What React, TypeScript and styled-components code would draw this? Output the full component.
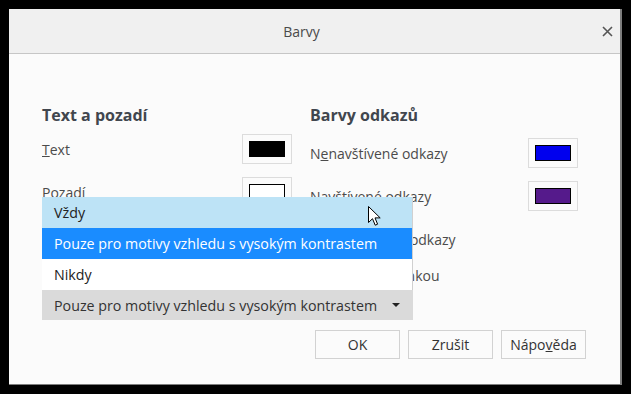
import styled, {createGlobalStyle} from 'styled-components';

const GlobalStyle = createGlobalStyle`
    html, body {
        margin: 0;
        padding: 0;
        background: #000;
    }
    body {
        font-family: 'Open Sans', 'Noto Sans', sans-serif;
    }
`;

const Screen = styled.div`
    width: 631px;
    height: 394px;
    padding: 9px 0 0 9px;
    box-sizing: border-box;
`;

const Dialog = styled.div`
    width: 613px;
    height: 376px;
    box-sizing: border-box;
    background: #fbfbfb;
    border-right: 2px solid #7d7d7d;
    border-bottom: 1px solid #7d7d7d;
    display: flex;
    flex-direction: column;
`;

const TitleBar = styled.div`
    height: 44px;
    display: flex;
    align-items: center;
    background: #f0f0f0;
    border-bottom: 1px solid #c6c6c6;
    color: #4a4a4a;
    font-size: 14px;
`;

const Title = styled.div`
    flex: 1;
    text-align: center;
`;

const CloseButton = styled.div`
    width: 26px;
    display: flex;
    justify-content: center;
    color: #555;
`;

const Body = styled.div`
    padding: 50px 42px 0 33px;
`;

const Columns = styled.div`
    display: grid;
    grid-template-columns: 250px 268px;
    column-gap: 18px;
`;

const Column = styled.div<{$offset: number}>`
    display: flex;
    flex-direction: column;
    gap: 13px;

    & > h2 + * {
        margin-top: ${p => p.$offset - 13}px;
    }
`;

const Heading = styled.h2`
    margin: 0;
    font-size: 16px;
    line-height: 22px;
    font-weight: 700;
    color: #41464e;
`;

const Row = styled.div`
    height: 30px;
    display: flex;
    align-items: center;
    justify-content: space-between;
    color: #4b4b4b;
    font-size: 14px;
    white-space: nowrap;
`;

const SwatchButton = styled.div`
    width: 50px;
    height: 30px;
    box-sizing: border-box;
    border: 1px solid #dcdcdc;
    background: #fbfbfb;
    display: flex;
    align-items: center;
    justify-content: center;
`;

const Swatch = styled.div<{$color: string}>`
    width: 36px;
    height: 16px;
    box-sizing: border-box;
    border: 1px solid #000;
    background: ${p => p.$color};
`;

const CheckRow = styled(Row)`
    justify-content: flex-start;
    gap: 8px;
`;

const CheckBox = styled.span`
    width: 14px;
    height: 14px;
    border: 1px solid #333;
    background: #fff;
`;

const OverrideLabel = styled.div`
    margin-top: 12px;
    line-height: 20px;
    font-size: 14px;
    color: #4b4b4b;
    white-space: nowrap;
`;

const SelectWrap = styled.div`
    position: relative;
    width: 371px;
    margin-top: 4px;
`;

const SelectBox = styled.div`
    height: 30px;
    box-sizing: border-box;
    padding: 0 12px;
    display: flex;
    align-items: center;
    justify-content: space-between;
    background: #dadada;
    color: #333;
    font-size: 14.25px;
`;

const Arrow = styled.span`
    width: 0;
    height: 0;
    border-left: 4px solid transparent;
    border-right: 4px solid transparent;
    border-top: 4px solid #222;
    margin-right: 1px;
`;

const Popup = styled.div`
    position: absolute;
    left: 0;
    right: 0;
    bottom: 100%;
    background: #fff;
    border-right: 1px solid #d0d0d0;
`;

const Option = styled.div<{$state?: 'hover' | 'selected'}>`
    height: 31px;
    padding: 0 12px;
    display: flex;
    align-items: center;
    font-size: 14.25px;
    color: ${p => (p.$state === 'selected' ? '#fff' : '#222')};
    background: ${p =>
        p.$state === 'selected' ? '#1a8cff' : p.$state === 'hover' ? '#bde3f6' : '#fff'};
`;

const Cursor = styled.svg`
    position: absolute;
    left: 326px;
    top: 9px;
`;

const Footer = styled.div`
    display: flex;
    justify-content: flex-end;
    gap: 8px;
    padding: 10px 34px 0 0;
`;

const Button = styled.div`
    width: 85px;
    height: 29px;
    box-sizing: border-box;
    border: 1px solid #d2d2d2;
    background: #fbfbfb;
    display: flex;
    align-items: center;
    justify-content: center;
    color: #333;
    font-size: 14px;
`;

const App = () => {
    return (
        <Screen>
            <GlobalStyle />
            <Dialog>
                <TitleBar>
                    <Title>Barvy</Title>
                    <CloseButton>
                        <svg width='11' height='11' viewBox='0 0 11 11'>
                            <path d='M1 1L10 10M10 1L1 10' stroke='#555' strokeWidth='1.6' />
                        </svg>
                    </CloseButton>
                </TitleBar>
                <Body>
                    <Columns>
                        <Column $offset={8}>
                            <Heading>Text a pozadí</Heading>
                            <Row>
                                <span><u>T</u>ext</span>
                                <SwatchButton><Swatch $color='#000' /></SwatchButton>
                            </Row>
                            <Row>
                                <span><u>P</u>ozadí</span>
                                <SwatchButton><Swatch $color='#fff' /></SwatchButton>
                            </Row>
                            <CheckRow>
                                <CheckBox />
                                <span>Použít systémové barvy</span>
                            </CheckRow>
                        </Column>
                        <Column $offset={12}>
                            <Heading>Barvy odkazů</Heading>
                            <Row>
                                <span>N<u>e</u>navštívené odkazy</span>
                                <SwatchButton><Swatch $color='#0000ee' /></SwatchButton>
                            </Row>
                            <Row>
                                <span>Navštívené odkazy</span>
                                <SwatchButton><Swatch $color='#551a8b' /></SwatchButton>
                            </Row>
                            <CheckRow>
                                <CheckBox />
                                <span>Podtrhávat odkazy</span>
                            </CheckRow>
                        </Column>
                    </Columns>
                    <OverrideLabel>Upřednostnit zvolené barvy před barvami určenými stránkou</OverrideLabel>
                    <SelectWrap>
                        <Popup>
                            <Option $state='hover'>Vždy</Option>
                            <Option $state='selected'>Pouze pro motivy vzhledu s vysokým kontrastem</Option>
                            <Option>Nikdy</Option>
                            <Cursor width='13' height='21' viewBox='0 0 13 21'>
                                <path
                                    d='M0.5 0.5V16.5L4.5 12.7L7.2 19.2L9.6 18.2L7 11.9H12.2Z'
                                    fill='#fff'
                                    stroke='#000'
                                    strokeWidth='1'
                                />
                            </Cursor>
                        </Popup>
                        <SelectBox>
                            <span>Pouze pro motivy vzhledu s vysokým kontrastem</span>
                            <Arrow />
                        </SelectBox>
                    </SelectWrap>
                </Body>
                <Footer>
                    <Button>OK</Button>
                    <Button>Zrušit</Button>
                    <Button>Nápo<u>v</u>ěda</Button>
                </Footer>
            </Dialog>
        </Screen>
    );
};

export default App;
